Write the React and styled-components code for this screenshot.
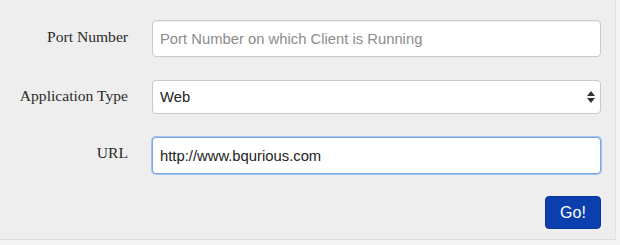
import styled, { createGlobalStyle } from 'styled-components';

const GlobalStyle = createGlobalStyle`
  html, body {
    margin: 0;
    padding: 0;
    background: #f4f4f4;
  }
`;

const Panel = styled.form`
  width: 616px;
  height: 240px;
  box-sizing: border-box;
  background: #eeeeee;
  border-right: 1px solid #e2e2e2;
  border-bottom: 1px solid #dcdcdc;
  padding: 20px 14px 0 0;
  display: flex;
  flex-direction: column;
`;

const Row = styled.div`
  display: grid;
  grid-template-columns: 128px 1fr;
  column-gap: 24px;
  align-items: start;
  margin-bottom: ${props => props.gap || 23}px;
`;

const Label = styled.label`
  font-family: "Liberation Serif", "Times New Roman", serif;
  font-size: 15.6px;
  color: #2a2a2a;
  text-align: right;
  padding-top: ${props => props.top || 8}px;
  white-space: nowrap;
`;

const Input = styled.input`
  box-sizing: border-box;
  width: 100%;
  height: ${props => props.h || 37}px;
  padding: 0 7px;
  font-family: "Liberation Sans", Arial, sans-serif;
  font-size: 14.8px;
  color: #222;
  background: #fff;
  border: 1px solid ${props => (props.focused ? '#79a7e6' : '#c9c9c9')};
  border-radius: 4px;
  box-shadow: ${props =>
    props.focused
      ? '0 0 0 1px rgba(102, 160, 235, 0.55)'
      : 'inset 0 1px 1px rgba(0, 0, 0, 0.06)'};
  outline: none;

  &::placeholder {
    color: #8c8c8c;
  }
`;

const SelectWrap = styled.div`
  position: relative;
`;

const Select = styled.select`
  box-sizing: border-box;
  width: 100%;
  height: 34px;
  padding: 0 7px;
  font-family: "Liberation Sans", Arial, sans-serif;
  font-size: 14.8px;
  color: #222;
  background: #fff;
  border: 1px solid #c9c9c9;
  border-radius: 4px;
  appearance: none;
  outline: none;
`;

const Arrows = styled.svg`
  position: absolute;
  right: 6px;
  top: 11px;
  pointer-events: none;
`;

const Actions = styled.div`
  display: flex;
  justify-content: flex-end;
`;

const GoButton = styled.button`
  width: 56px;
  height: 33px;
  margin-top: -1px;
  background: #0b3fae;
  color: #fff;
  border: 1px solid #0a379a;
  border-radius: 4px;
  font-family: "Liberation Sans", Arial, sans-serif;
  font-size: 16px;
  cursor: pointer;
`;

export default function App() {
  return (
    <>
      <GlobalStyle />
      <Panel onSubmit={e => e.preventDefault()}>
        <Row gap={23}>
          <Label top={8}>Port Number</Label>
          <Input placeholder="Port Number on which Client is Running" />
        </Row>
        <Row gap={23}>
          <Label top={7}>Application Type</Label>
          <SelectWrap>
            <Select defaultValue="web">
              <option value="web">Web</option>
              <option value="mobile">Mobile</option>
            </Select>
            <Arrows width="8" height="12" viewBox="0 0 8 12">
              <path d="M4 0 L8 5 L0 5 Z" fill="#333" />
              <path d="M4 12 L8 7 L0 7 Z" fill="#333" />
            </Arrows>
          </SelectWrap>
        </Row>
        <Row gap={23}>
          <Label top={7}>URL</Label>
          <Input focused defaultValue="http://www.bqurious.com" />
        </Row>
        <Actions>
          <GoButton type="submit">Go!</GoButton>
        </Actions>
      </Panel>
    </>
  );
}
